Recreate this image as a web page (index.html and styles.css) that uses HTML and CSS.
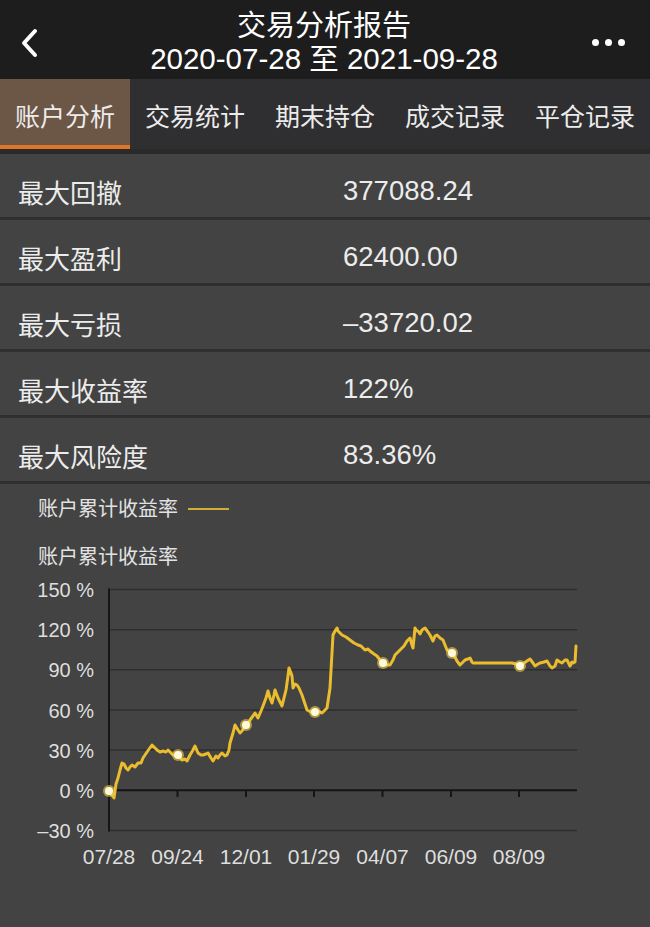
FILE: index.html
```html
<!DOCTYPE html>
<html lang="zh-CN">
<head>
<meta charset="utf-8">
<title>交易分析报告</title>
<link rel="stylesheet" href="styles.css">
</head>
<body>
<div class="app">
  <header class="nav">
    <div class="nav-back">
      <svg width="22" height="32" viewBox="0 0 22 32"><path d="M17 4 L6 16 L17 28" fill="none" stroke="#ffffff" stroke-width="4" stroke-linecap="round" stroke-linejoin="round"/></svg>
    </div>
    <div class="nav-title">
      <div class="nav-title-main">交易分析报告</div>
      <div class="nav-title-sub">2020-07-28 至 2021-09-28</div>
    </div>
    <div class="nav-more"><span class="dot"></span><span class="dot"></span><span class="dot"></span></div>
  </header>

  <nav class="tabs">
    <div class="tab tab-active">账户分析</div>
    <div class="tab">交易统计</div>
    <div class="tab">期末持仓</div>
    <div class="tab">成交记录</div>
    <div class="tab">平仓记录</div>
  </nav>

  <div class="stats">
    <div class="stat-row"><span class="stat-label">最大回撤</span><span class="stat-value">377088.24</span></div>
    <div class="stat-row"><span class="stat-label">最大盈利</span><span class="stat-value">62400.00</span></div>
    <div class="stat-row"><span class="stat-label">最大亏损</span><span class="stat-value">–33720.02</span></div>
    <div class="stat-row"><span class="stat-label">最大收益率</span><span class="stat-value">122%</span></div>
    <div class="stat-row"><span class="stat-label">最大风险度</span><span class="stat-value">83.36%</span></div>
  </div>

  <section class="chart">
    <div class="chart-legend"><span>账户累计收益率</span><span class="legend-line"></span></div>
    <div class="chart-title">账户累计收益率</div>
    <svg class="chart-svg" width="650" height="300" viewBox="0 575 650 300">
      <g class="grid" stroke="#2e2e2e" stroke-width="1.5">
        <line x1="109" y1="591.5" x2="577" y2="591.5"/>
        <line x1="109" y1="631.7" x2="577" y2="631.7"/>
        <line x1="109" y1="671.8" x2="577" y2="671.8"/>
        <line x1="109" y1="712" x2="577" y2="712"/>
        <line x1="109" y1="752.1" x2="577" y2="752.1"/>
        <line x1="109" y1="832.5" x2="577" y2="832.5"/>
      </g>
      <g stroke="#151515" stroke-width="2">
        <line x1="109" y1="590.5" x2="109" y2="833.5"/>
        <line x1="108" y1="792.3" x2="577" y2="792.3"/>
        <line x1="177.5" y1="792.3" x2="177.5" y2="799"/>
        <line x1="246" y1="792.3" x2="246" y2="799"/>
        <line x1="314" y1="792.3" x2="314" y2="799"/>
        <line x1="382.5" y1="792.3" x2="382.5" y2="799"/>
        <line x1="451" y1="792.3" x2="451" y2="799"/>
        <line x1="519" y1="792.3" x2="519" y2="799"/>
      </g>
      <g class="y-labels" fill="#dedede" font-size="20" text-anchor="end">
        <text x="94" y="599">150 %</text>
        <text x="94" y="639.2">120 %</text>
        <text x="94" y="679.3">90 %</text>
        <text x="94" y="719.5">60 %</text>
        <text x="94" y="759.6">30 %</text>
        <text x="94" y="799.8">0 %</text>
        <text x="94" y="840">–30 %</text>
      </g>
      <g class="x-labels" fill="#dedede" font-size="21" text-anchor="middle">
        <text x="109" y="866">07/28</text>
        <text x="177.5" y="866">09/24</text>
        <text x="246" y="866">12/01</text>
        <text x="314" y="866">01/29</text>
        <text x="382.5" y="866">04/07</text>
        <text x="451" y="866">06/09</text>
        <text x="519" y="866">08/09</text>
      </g>
      <polyline fill="none" stroke="#ebbd2e" stroke-width="3" stroke-linejoin="round" stroke-linecap="round"
        points="109,793 114,800 116,786 118,780 120,772 122,765 124,766 126,770 128,772 130,769 132,767 135,769 138,765 141,765 143,760 147,754 152,747 155,750 157,752 160,754 163,753 166,754 168,752 171,755 173,757 178,757 182,762 185,761 187,763 190,757 193,752 195,748 198,755 201,757 203,757 206,756 208,755 211,760 213,763 216,758 218,760 220,757 222,755 225,758 227,757 229,752 230,745 233,735 235,727 238,732 240,735 242,733 246,727 248,726 250,722 253,718 255,715 258,720 261,713 263,708 266,700 268,693 270,700 272,705 274,697 275,692 278,700 280,704 282,708 284,700 286,692 288,678 289,670 291,675 292,678 293,690 295,686 297,687 299,690 302,697 304,703 307,712 311,714 315,714 318,713 322,715 325,712 327,710 330,690 333,637 335,633 337,630 338,633 342,637 346,639 350,642 354,645 358,647 361,648 365,652 368,651 370,653 374,656 377,658 380,662 383,665 387,667 390,667 393,662 395,657 398,654 400,652 404,648 407,643 409,641 410,640 412,647 413,650 414,640 415,630 417,633 418,633 420,636 422,632 425,630 428,634 430,637 432,641 433,643 435,638 437,637 440,640 443,642 445,647 447,652 452,655 455,659 457,663 460,667 463,664 465,662 468,661 470,660 472,664 473,665 480,665 512,665 516,666 520,668 524,665 527,663 530,661 533,665 535,668 538,666 540,665 544,664 547,663 550,668 552,670 555,668 557,662 560,664 562,665 565,662 567,662 569,666 570,668 572,664 573,665 575,664 576,648"/>
      <g class="points">
        <circle cx="109" cy="793" r="6" fill="#f4cf4a" opacity="0.6"/><circle cx="109" cy="793" r="4" fill="#fff9dc"/>
        <circle cx="178" cy="757" r="6" fill="#f4cf4a" opacity="0.6"/><circle cx="178" cy="757" r="4" fill="#fff9dc"/>
        <circle cx="246" cy="727" r="6" fill="#f4cf4a" opacity="0.6"/><circle cx="246" cy="727" r="4" fill="#fff9dc"/>
        <circle cx="315" cy="714" r="6" fill="#f4cf4a" opacity="0.6"/><circle cx="315" cy="714" r="4" fill="#fff9dc"/>
        <circle cx="383" cy="665" r="6" fill="#f4cf4a" opacity="0.6"/><circle cx="383" cy="665" r="4" fill="#fff9dc"/>
        <circle cx="452" cy="655" r="6" fill="#f4cf4a" opacity="0.6"/><circle cx="452" cy="655" r="4" fill="#fff9dc"/>
        <circle cx="520" cy="668" r="6" fill="#f4cf4a" opacity="0.6"/><circle cx="520" cy="668" r="4" fill="#fff9dc"/>
      </g>
    </svg>
  </section>
</div>
</body>
</html>
```

FILE: styles.css
```css
* { box-sizing: border-box; }
html, body { margin: 0; padding: 0; }
body {
  background: #424342;
  font-family: "Liberation Sans", "Noto Sans CJK SC", sans-serif;
  color: #e8e8e8;
}
.app {
  width: 650px;
  min-height: 927px;
  background: #424342;
}

/* header */
.nav {
  height: 79px;
  background: #1d1d1d;
  display: flex;
  align-items: center;
  padding: 0 20px 0 18px;
}
.nav-back {
  width: 60px;
  display: flex;
  align-items: center;
  height: 32px;
  margin-top: 6px;
}
.nav-back svg { display: block; }
.nav-title {
  flex: 1;
  display: flex;
  flex-direction: column;
  align-items: center;
  color: #ffffff;
  padding-top: 7px;
}
.nav-title-main {
  font-size: 29px;
  line-height: 32px;
}
.nav-title-sub {
  font-size: 29.5px;
  line-height: 34px;
}
.nav-more {
  width: 60px;
  display: flex;
  justify-content: flex-end;
  gap: 6px;
  padding-top: 6px;
  padding-right: 5px;
}
.dot {
  width: 7px;
  height: 7px;
  border-radius: 50%;
  background: #ffffff;
}

/* tabs */
.tabs {
  display: flex;
  height: 75px;
  background: #2f2f31;
  border-bottom: 5px solid #2a2a2a;
}
.tab {
  flex: 1;
  display: flex;
  align-items: center;
  justify-content: center;
  font-size: 25px;
  color: #ececec;
  padding-top: 2px;
}
.tab-active {
  background: #6c5646;
  border-bottom: 4px solid #e2742c;
  padding-top: 6px;
}

/* stats */
.stats {
  display: flex;
  flex-direction: column;
  gap: 3px;
  background: #2e2f2e;
  padding-bottom: 3px;
}
.stat-row {
  height: 63px;
  display: flex;
  align-items: center;
  background: #424342;
  padding-left: 18px;
  padding-top: 11px;
}
.stat-label {
  width: 325px;
  font-size: 26px;
  color: #ececec;
}
.stat-value {
  font-size: 27.5px;
  color: #ececec;
}

/* chart */
.chart {
  padding-top: 14px;
}
.chart-legend {
  display: flex;
  align-items: center;
  padding-left: 38px;
  font-size: 20px;
  line-height: 22px;
  color: #e2e2e2;
  gap: 10px;
}
.legend-line {
  width: 41px;
  height: 2px;
  background: #d1ad38;
}
.chart-title {
  padding-left: 38px;
  margin-top: 26px;
  font-size: 20px;
  line-height: 22px;
  color: #e2e2e2;
}
.chart-svg {
  display: block;
  margin-top: 5px;
  font-family: "Liberation Sans", "Noto Sans CJK SC", sans-serif;
}
```
